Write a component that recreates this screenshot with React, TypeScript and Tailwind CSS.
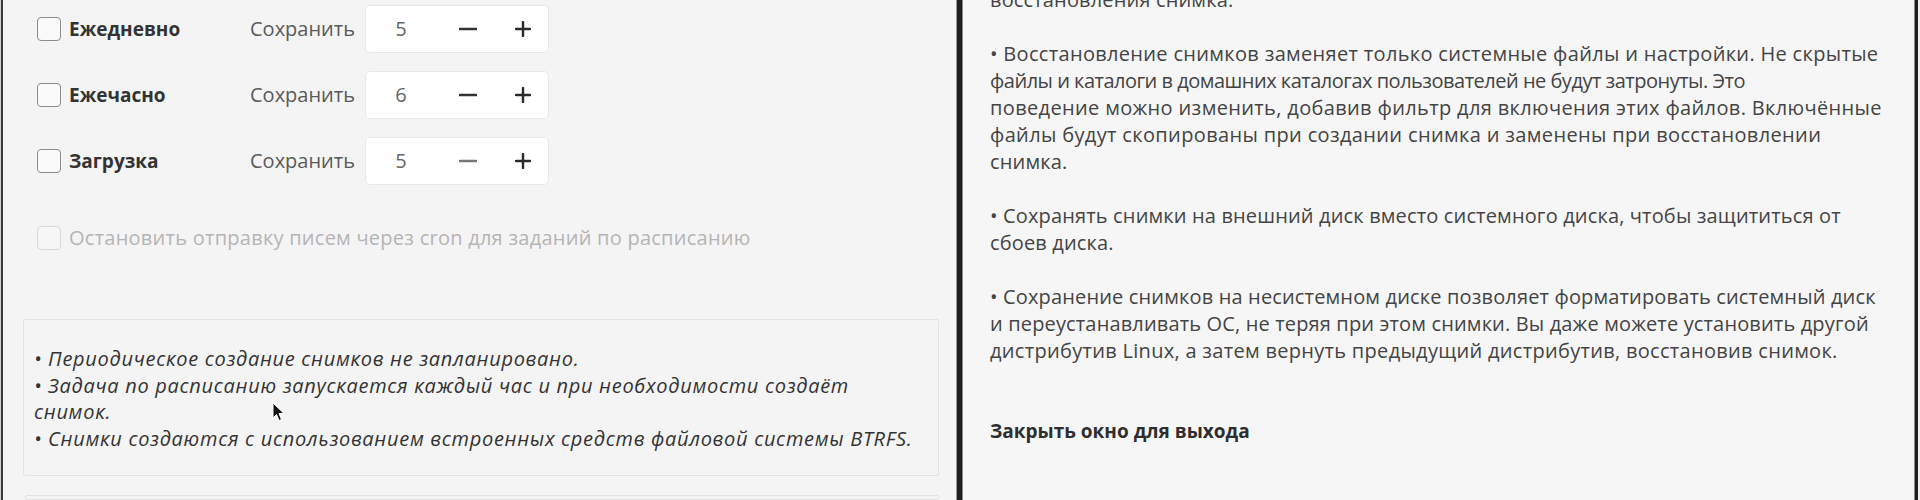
import React from "react";

const FONT = { fontFamily: "'Open Sans', 'Noto Sans', 'DejaVu Sans', sans-serif" };

const rows = [
  { label: "Ежедневно", value: 5, minus: "#333333" },
  { label: "Ежечасно", value: 6, minus: "#333333" },
  { label: "Загрузка", value: 5, minus: "#777777" },
];

function Checkbox({ disabled }: { disabled?: boolean }) {
  return (
    <div
      className={
        disabled
          ? "w-[24px] h-[24px] rounded-[4px] border-[1.5px] border-[#d8d8d8] bg-[#f6f6f6] shrink-0"
          : "w-[24px] h-[24px] rounded-[4px] border-[1.5px] border-[#8c8c8c] bg-[#fafafa] shrink-0"
      }
    />
  );
}

function Stepper({ value, minus }: { value: number; minus: string }) {
  return (
    <div className="w-[184px] h-[48px] bg-white rounded-[5px] border border-[#e8e8e8] flex items-center">
      <div className="w-[70px] text-center text-[20px] text-[#666]">{value}</div>
      <div className="w-[64px] flex justify-center">
        <svg width="18" height="4" viewBox="0 0 18 4">
          <line x1="1" y1="2" x2="17" y2="2" stroke={minus} strokeWidth="2.6" strokeLinecap="round" />
        </svg>
      </div>
      <div className="w-[46px] flex justify-center">
        <svg width="16" height="16" viewBox="0 0 16 16">
          <line x1="1" y1="8" x2="15" y2="8" stroke="#2a2a2a" strokeWidth="2.4" strokeLinecap="round" />
          <line x1="8" y1="1" x2="8" y2="15" stroke="#2a2a2a" strokeWidth="2.4" strokeLinecap="round" />
        </svg>
      </div>
    </div>
  );
}

const NORMAL = "h-[27px] leading-[27px] text-[20px] text-[#444] whitespace-nowrap";

const rightLines: { t: string; c: string }[] = [
  { t: "восстановления снимка.", c: NORMAL + " tracking-[0.15px]" },
  { t: "", c: NORMAL },
  { t: "• Восстановление снимков заменяет только системные файлы и настройки. Не скрытые", c: NORMAL + " tracking-[0.32px]" },
  { t: "файлы и каталоги в домашних каталогах пользователей не будут затронуты. Это", c: NORMAL + " tracking-[-0.5px]" },
  { t: "поведение можно изменить, добавив фильтр для включения этих файлов. Включённые", c: NORMAL + " tracking-[0.35px]" },
  { t: "файлы будут скопированы при создании снимка и заменены при восстановлении", c: NORMAL + " tracking-[0.35px]" },
  { t: "снимка.", c: NORMAL + " tracking-[0.15px]" },
  { t: "", c: NORMAL },
  { t: "• Сохранять снимки на внешний диск вместо системного диска, чтобы защититься от", c: NORMAL + " tracking-[0.15px]" },
  { t: "сбоев диска.", c: NORMAL + " tracking-[0.15px]" },
  { t: "", c: NORMAL },
  { t: "• Сохранение снимков на несистемном диске позволяет форматировать системный диск", c: NORMAL + " tracking-[0.15px]" },
  { t: "и переустанавливать ОС, не теряя при этом снимки. Вы даже можете установить другой", c: NORMAL + " tracking-[0.15px]" },
  { t: "дистрибутив Linux, а затем вернуть предыдущий дистрибутив, восстановив снимок.", c: NORMAL + " tracking-[0.3px]" },
  { t: "", c: NORMAL },
  { t: "", c: NORMAL },
  { t: "Закрыть окно для выхода", c: "h-[27px] leading-[27px] text-[19px] font-bold text-[#2e2e2e] whitespace-nowrap" },
];

const infoLines = [
  "• Периодическое создание снимков не запланировано.",
  "• Задача по расписанию запускается каждый час и при необходимости создаёт",
  "снимок.",
  "• Снимки создаются с использованием встроенных средств файловой системы BTRFS.",
];

export default function App() {
  return (
    <div className="w-[1920px] h-[500px] overflow-hidden flex bg-[#f5f5f5] relative" style={FONT}>
      {/* left window edge */}
      <div className="w-[1px] bg-[#cfcfcf]" />
      <div className="w-[2px] bg-[#3a3a3a]" />

      {/* left panel */}
      <div className="w-[953px] bg-[#f4f4f4] flex flex-col pl-[34px] pt-[5px]">
        <div className="flex flex-col gap-[18px]">
          {rows.map((r) => (
            <div key={r.label} className="flex items-center h-[48px]">
              <div className="w-[213px] flex items-center gap-[8px]">
                <Checkbox />
                <span className="text-[19px] font-bold text-[#333]">{r.label}</span>
              </div>
              <div className="w-[115px] text-[20px] text-[#5a5a5a]">Сохранить</div>
              <Stepper value={r.value} minus={r.minus} />
            </div>
          ))}
        </div>

        <div className="flex items-center gap-[8px] mt-[41px] h-[24px]">
          <Checkbox disabled />
          <span className="text-[20px] tracking-[0.25px] text-[#b4b4b4]">
            Остановить отправку писем через cron для заданий по расписанию
          </span>
        </div>

        <div className="ml-[-14px] mr-[17px] mt-[69px] border border-[#e2e2e2] rounded-[2px] pt-[26px] pb-[22px] pl-[10px]">
          {infoLines.map((l, i) => (
            <div key={i} className="italic text-[20px] tracking-[0.7px] leading-[26.7px] text-[#333] whitespace-nowrap">
              {l}
            </div>
          ))}
        </div>

        <div className="ml-[-12px] mr-[17px] mt-[19px] h-[40px] border border-[#e2e2e2] rounded-[2px]" />
      </div>

      {/* divider */}
      <div className="w-[1px] bg-[#9a9a9a]" />
      <div className="w-[5px] bg-[#1e1e1e]" />
      <div className="w-[1px] bg-[#8a8a8a]" />

      {/* right panel */}
      <div className="w-[951px] bg-[#f6f6f6] pl-[27px] overflow-hidden">
        <div className="mt-[-14px]">
          {rightLines.map((l, i) => (
            <div key={i} className={l.c}>
              {l.t}
            </div>
          ))}
        </div>
      </div>

      {/* right window edge */}
      <div className="w-[1px] bg-[#8a8a8a]" />
      <div className="w-[3px] bg-[#1e1e1e]" />
      <div className="flex-1 bg-[#f0f0f0]" />

      {/* mouse cursor */}
      <svg className="absolute left-[272px] top-[402px]" width="13" height="20" viewBox="0 0 13 20">
        <path d="M1 1 L1 16 L4.5 12.5 L7 18.5 L9.5 17.5 L7 11.5 L12 11.5 Z" fill="#111" stroke="#fff" strokeWidth="1" />
      </svg>
    </div>
  );
}
